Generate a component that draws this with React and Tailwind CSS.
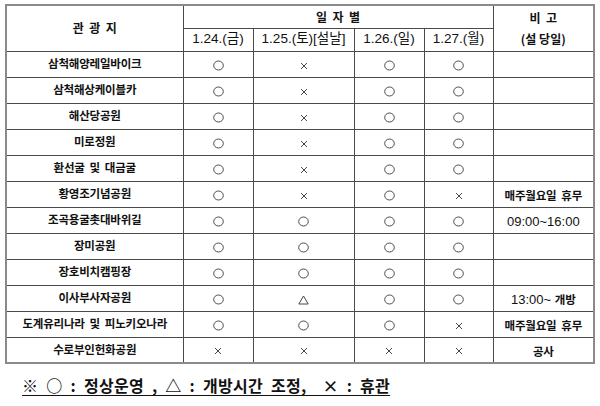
import React from "react";

const O = "○";
const X = "×";
const T = "△";

const rows = [
  ["삼척해양레일바이크", O, X, O, O, ""],
  ["삼척해상케이블카", O, X, O, O, ""],
  ["해산당공원", O, X, O, O, ""],
  ["미로정원", O, X, O, O, ""],
  ["환선굴 및 대금굴", O, X, O, O, ""],
  ["황영조기념공원", O, X, O, X, "매주월요일 휴무"],
  ["조곡용굴촛대바위길", O, O, O, O, "09:00~16:00"],
  ["장미공원", O, O, O, O, ""],
  ["장호비치캠핑장", O, O, O, O, ""],
  ["이사부사자공원", O, T, O, O, "13:00~ 개방"],
  ["도계유리나라 및 피노키오나라", O, O, O, X, "매주월요일 휴무"],
  ["수로부인헌화공원", X, X, X, X, "공사"],
];

const kr = "font-['Noto_Sans_CJK_KR',sans-serif]";
const ar = "font-['Liberation_Sans','Noto_Sans_CJK_KR',sans-serif]";

function Mark({ v }) {
  if (v === O)
    return (
      <svg width="11" height="11" viewBox="0 0 11 11" className="inline-block align-middle">
        <ellipse cx="5.5" cy="5.5" rx="4.8" ry="4.5" fill="none" stroke="#3a3a3a" strokeWidth="0.9" />
      </svg>
    );
  if (v === X)
    return (
      <svg width="8" height="8" viewBox="0 0 8 8" className="inline-block align-middle">
        <path d="M1 1L7 7M7 1L1 7" stroke="#333" strokeWidth="0.9" />
      </svg>
    );
  return (
    <svg width="11" height="10" viewBox="0 0 11 10" className="inline-block align-middle">
      <path d="M5.5 1L10.2 9H0.8Z" fill="none" stroke="#333" strokeWidth="0.9" />
    </svg>
  );
}

const krCell = `${kr} text-[11.5px] font-bold tracking-[-0.2px] whitespace-pre`;

function Note({ t }) {
  if (!t) return null;
  if (t.startsWith("09")) return <span className={`${ar} text-[13px]`}>{t}</span>;
  if (t.startsWith("13"))
    return (
      <span>
        <span className={`${ar} text-[13px]`}>13:00~ </span>
        <span className={krCell}>개방</span>
      </span>
    );
  return <span className={krCell}>{t.replace(" ", "  ")}</span>;
}

const cell = "border border-[#4a4a4a] p-0 text-center align-middle";

export default function App() {
  return (
    <div className="w-[600px] h-[406px] bg-white text-[#111] overflow-hidden">
      <div className="pt-[4px] pl-[5px]">
        <table className="table-fixed border-collapse w-[588px] border-2 border-[#8a8a8a]">
          <colgroup>
            <col className="w-[177px]" />
            <col className="w-[70px]" />
            <col className="w-[101px]" />
            <col className="w-[70px]" />
            <col className="w-[69px]" />
            <col className="w-[101px]" />
          </colgroup>
          <thead>
            <tr className="h-[23px]">
              <th rowSpan={2} className={`${cell} ${kr} text-[12px] font-bold whitespace-pre`}>
                관  광  지
              </th>
              <th colSpan={4} className={`${cell} ${kr} text-[12px] font-bold whitespace-pre`}>
                일  자  별
              </th>
              <th rowSpan={2} className={`${cell} ${kr} text-[12px] font-bold leading-[21px]`}>
                <div className="whitespace-pre">비  고</div>
                <div className="whitespace-pre">(설 당일)</div>
              </th>
            </tr>
            <tr className="h-[23px]">
              <th className={`${cell} ${ar} text-[13.5px] font-normal`}>1.24.(금)</th>
              <th className={`${cell} ${ar} text-[13.5px] font-normal`}>1.25.(토)[설날]</th>
              <th className={`${cell} ${ar} text-[13.5px] font-normal`}>1.26.(일)</th>
              <th className={`${cell} ${ar} text-[13.5px] font-normal`}>1.27.(월)</th>
            </tr>
          </thead>
          <tbody>
            {rows.map((r, i) => (
              <tr key={i} className="h-[26px]">
                <td className={`${cell} ${krCell}`}>{r[0].replaceAll(" ", "  ")}</td>
                {r.slice(1, 5).map((v, j) => (
                  <td key={j} className={cell}>
                    <Mark v={v} />
                  </td>
                ))}
                <td className={cell}>
                  <Note t={r[5]} />
                </td>
              </tr>
            ))}
          </tbody>
        </table>
      </div>
      <div className="pl-[22px] pt-[10px]">
        <span
          className={`${kr} text-[16px] font-bold underline underline-offset-[3px] whitespace-pre leading-[20px] tracking-[0.3px] [word-spacing:4px]`}
        >
          ※ ○ : 정상운영 , △ : 개방시간 조정,  × : 휴관
        </span>
      </div>
    </div>
  );
}
